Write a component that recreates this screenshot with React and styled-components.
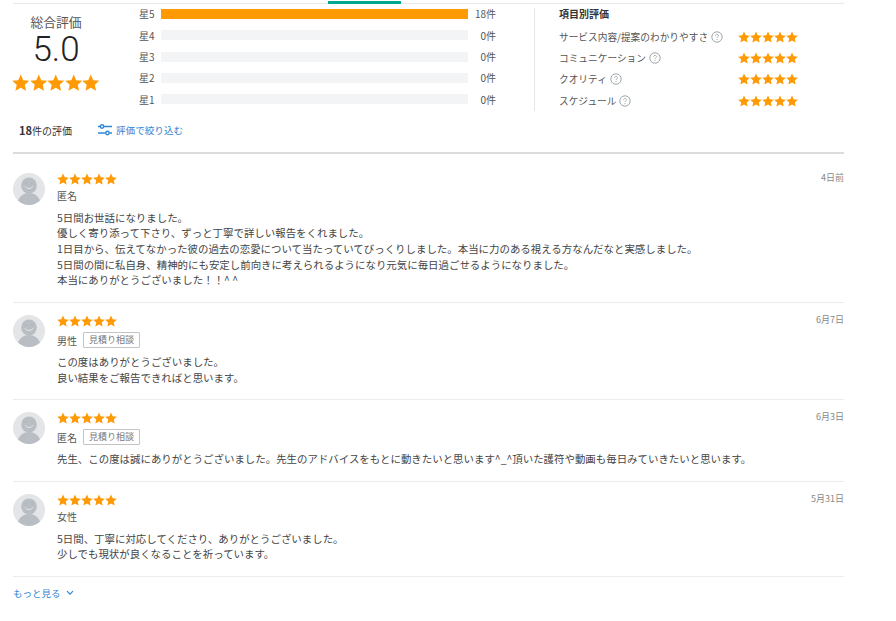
import React from 'react';
import styled, { createGlobalStyle } from 'styled-components';

const GlobalStyle = createGlobalStyle`
  html, body {
    margin: 0;
    padding: 0;
    background: #fff;
    font-family: "Noto Sans CJK JP", "Noto Sans", sans-serif;
    color: #444;
  }
`;

const Page = styled.div`
  width: 831px;
  margin-left: 13px;
  position: relative;
  border-top: 1px solid #e8e8e8;
  margin-top: 3px;
`;

const ActiveTab = styled.div`
  position: absolute;
  top: -3px;
  left: 315px;
  width: 73px;
  height: 3px;
  background: #00a790;
`;

const Summary = styled.section`
  display: flex;
  height: 106px;
`;

const Overall = styled.div`
  width: 86px;
  margin-right: 40px;
  display: flex;
  flex-direction: column;
  align-items: center;
`;

const OverallLabel = styled.div`
  font-size: 12.8px;
  line-height: 18px;
  margin-top: 9px;
  color: #555;
`;

const OverallScore = styled.div`
  font-family: Roboto, sans-serif;
  font-weight: 300;
  font-size: 35px;
  line-height: 38px;
  color: #222;
  margin-bottom: 5px;
`;

const Bars = styled.div`
  width: 357px;
  display: flex;
  flex-direction: column;
`;

const BarRow = styled.div`
  display: flex;
  align-items: center;
  height: 21.5px;
  margin-top: ${(p) => (p.$first ? -1 : 0)}px;
  font-size: 10px;
  color: #555;
`;

const BarLabel = styled.span`
  width: 22px;
`;

const BarTrack = styled.div`
  width: 307px;
  height: 10px;
  background: #f3f4f5;
`;

const BarFill = styled.div`
  height: 100%;
  background: #ff9a05;
`;

const BarCount = styled.span`
  width: 28px;
  text-align: right;
`;

const Categories = styled.div`
  margin-top: 4px;
  height: 103px;
  border-left: 1px solid #e6e6e6;
  padding-left: 24px;
  margin-left: 38px;
  flex: 1;
`;

const CategoryTitle = styled.div`
  font-size: 10px;
  font-weight: 700;
  line-height: 12px;
  color: #333;
  margin-bottom: 6px;
`;

const CategoryRow = styled.div`
  display: flex;
  align-items: center;
  height: 21.3px;
`;

const CategoryName = styled.div`
  width: 179px;
  display: flex;
  align-items: center;
  gap: 3px;
  font-size: 9.7px;
  color: #555;
`;

const Help = styled.svg`
  width: 12px;
  height: 12px;
  flex: none;
`;

const Stars = styled.div`
  display: flex;
  flex: none;
`;

const StarIcon = styled.svg`
  display: block;
  width: ${(p) => p.$size}px;
  height: ${(p) => p.$size}px;
  fill: #ff9a05;
`;

const FilterBar = styled.div`
  display: flex;
  align-items: center;
  height: 44px;
  padding-left: 6px;
  border-bottom: 2px solid #dcdcdc;
  padding-bottom: 2px;
  box-sizing: border-box;
`;

const TotalCount = styled.div`
  font-size: 10px;
  color: #333;
  width: 79px;

  b {
    font-size: 11px;
    font-weight: 700;
  }
`;

const FilterLink = styled.a`
  display: flex;
  align-items: center;
  gap: 4px;
  font-size: 9.6px;
  color: #2f86d6;
`;

const ReviewList = styled.div`
  padding-top: 6.5px;
`;

const ReviewItem = styled.article`
  display: flex;
  padding: 12px 0 13.5px;
  border-bottom: 1px solid #ececec;
`;

const Avatar = styled.svg`
  width: 32px;
  height: 32px;
  flex: none;
  margin-right: 12px;
`;

const ReviewBody = styled.div`
  flex: 1;
  min-width: 0;
`;

const ReviewHead = styled.div`
  display: flex;
  justify-content: space-between;
`;

const ReviewDate = styled.div`
  font-size: 9px;
  line-height: 10px;
  color: #888;
`;

const MetaRow = styled.div`
  display: flex;
  align-items: center;
  gap: 6px;
  height: 16px;
  margin-top: ${(p) => (p.$tagged ? 5.5 : 3)}px;
  font-size: 10px;
  color: #555;
`;

const Tag = styled.span`
  box-sizing: border-box;
  height: 16px;
  padding: 0 5px;
  border: 1px solid #c4c4c4;
  border-radius: 1px;
  font-size: 9px;
  line-height: 14px;
  color: #777;
`;

const ReviewText = styled.p`
  margin: 6px 0 0;
  font-size: 10.45px;
  line-height: 15.7px;
  color: #444;
  white-space: pre-line;
`;

const MoreLink = styled.a`
  display: flex;
  align-items: center;
  gap: 5px;
  margin-top: 8px;
  font-size: 9.5px;
  line-height: 16px;
  color: #2f86d6;
`;

const Star = ({ size }) => (
  <StarIcon $size={size} viewBox="0 0 24 24">
    <path d="M12 .8l3.4 7.6 8.3.9-6.2 5.6 1.8 8.2L12 18.9l-7.3 4.2 1.8-8.2L.3 9.3l8.3-.9z" />
  </StarIcon>
);

const FiveStars = ({ size }) => (
  <Stars>
    {[0, 1, 2, 3, 4].map((i) => <Star key={i} size={size} />)}
  </Stars>
);

const HelpIcon = () => (
  <Help viewBox="0 0 12 12" fill="none">
    <circle cx="6" cy="6" r="5.2" stroke="#9ea7ab" />
    <path d="M4.5 4.8c0-.9.7-1.4 1.5-1.4s1.5.5 1.5 1.3c0 1.2-1.5 1.1-1.5 2.3" stroke="#9ea7ab" strokeWidth=".9" />
    <circle cx="6" cy="8.6" r=".6" fill="#9ea7ab" />
  </Help>
);

const UserAvatar = () => (
  <Avatar viewBox="0 0 32 32">
    <defs>
      <clipPath id="avatar-clip">
        <circle cx="16" cy="16" r="16" />
      </clipPath>
    </defs>
    <circle cx="16" cy="16" r="16" fill="#e3e5e7" />
    <g clipPath="url(#avatar-clip)">
      <ellipse cx="16" cy="31" rx="11.5" ry="11" fill="#b8bec3" />
      <ellipse cx="16" cy="12.5" rx="7.8" ry="8" fill="#b8bec3" />
      <path d="M12.2 13.5c1.6 2.8 6 2.8 7.6 0" stroke="#e3e5e7" strokeWidth="1" fill="none" strokeLinecap="round" />
      <circle cx="13" cy="10" r=".7" fill="#a9afb4" />
      <circle cx="19" cy="10" r=".7" fill="#a9afb4" />
    </g>
  </Avatar>
);

const FilterIcon = () => (
  <svg width="14" height="12" viewBox="0 0 14 12" fill="none" stroke="#2f86d6" strokeWidth="1.4">
    <path d="M0 2.5h2M6 2.5h8M0 9h7.5M11.5 9H14" />
    <circle cx="4" cy="2.5" r="1.7" />
    <circle cx="9.5" cy="9" r="1.7" />
  </svg>
);

const Chevron = () => (
  <svg width="8" height="6" viewBox="0 0 8 6" fill="none" stroke="#2f86d6" strokeWidth="1.2">
    <path d="M1 1.2l3 3 3-3" />
  </svg>
);

const bars = [
  { label: '星5', count: 18, ratio: 100 },
  { label: '星4', count: 0, ratio: 0 },
  { label: '星3', count: 0, ratio: 0 },
  { label: '星2', count: 0, ratio: 0 },
  { label: '星1', count: 0, ratio: 0 },
];

const categories = ['サービス内容/提案のわかりやすさ', 'コミュニケーション', 'クオリティ', 'スケジュール'];

const reviews = [
  {
    name: '匿名',
    date: '4日前',
    text: `5日間お世話になりました。
優しく寄り添って下さり、ずっと丁寧で詳しい報告をくれました。
1日目から、伝えてなかった彼の過去の恋愛について当たっていてびっくりしました。本当に力のある視える方なんだなと実感しました。
5日間の間に私自身、精神的にも安定し前向きに考えられるようになり元気に毎日過ごせるようになりました。
本当にありがとうございました！！^ ^`,
  },
  {
    name: '男性',
    tag: '見積り相談',
    date: '6月7日',
    text: `この度はありがとうございました。
良い結果をご報告できればと思います。`,
  },
  {
    name: '匿名',
    tag: '見積り相談',
    date: '6月3日',
    text: '先生、この度は誠にありがとうございました。先生のアドバイスをもとに動きたいと思います^_^頂いた護符や動画も毎日みていきたいと思います。',
  },
  {
    name: '女性',
    date: '5月31日',
    text: `5日間、丁寧に対応してくださり、ありがとうございました。
少しでも現状が良くなることを祈っています。`,
  },
];

const App = () => (
  <>
    <GlobalStyle />
    <Page>
      <ActiveTab />
      <Summary>
        <Overall>
          <OverallLabel>総合評価</OverallLabel>
          <OverallScore>5.0</OverallScore>
          <FiveStars size={17.5} />
        </Overall>
        <Bars>
          {bars.map((b, i) => (
            <BarRow key={b.label} $first={i === 0}>
              <BarLabel>{b.label}</BarLabel>
              <BarTrack>
                <BarFill style={{ width: `${b.ratio}%` }} />
              </BarTrack>
              <BarCount>{b.count}件</BarCount>
            </BarRow>
          ))}
        </Bars>
        <Categories>
          <CategoryTitle>項目別評価</CategoryTitle>
          {categories.map((c) => (
            <CategoryRow key={c}>
              <CategoryName>{c}<HelpIcon /></CategoryName>
              <FiveStars size={12} />
            </CategoryRow>
          ))}
        </Categories>
      </Summary>
      <FilterBar>
        <TotalCount><b>18</b>件の評価</TotalCount>
        <FilterLink><FilterIcon />評価で絞り込む</FilterLink>
      </FilterBar>
      <ReviewList>
        {reviews.map((r) => (
          <ReviewItem key={r.date}>
            <UserAvatar />
            <ReviewBody>
              <ReviewHead>
                <FiveStars size={12} />
                <ReviewDate>{r.date}</ReviewDate>
              </ReviewHead>
              <MetaRow $tagged={!!r.tag}>
                {r.name}
                {r.tag && <Tag>{r.tag}</Tag>}
              </MetaRow>
              <ReviewText>{r.text}</ReviewText>
            </ReviewBody>
          </ReviewItem>
        ))}
      </ReviewList>
      <MoreLink>もっと見る<Chevron /></MoreLink>
    </Page>
  </>
);

export default App;
